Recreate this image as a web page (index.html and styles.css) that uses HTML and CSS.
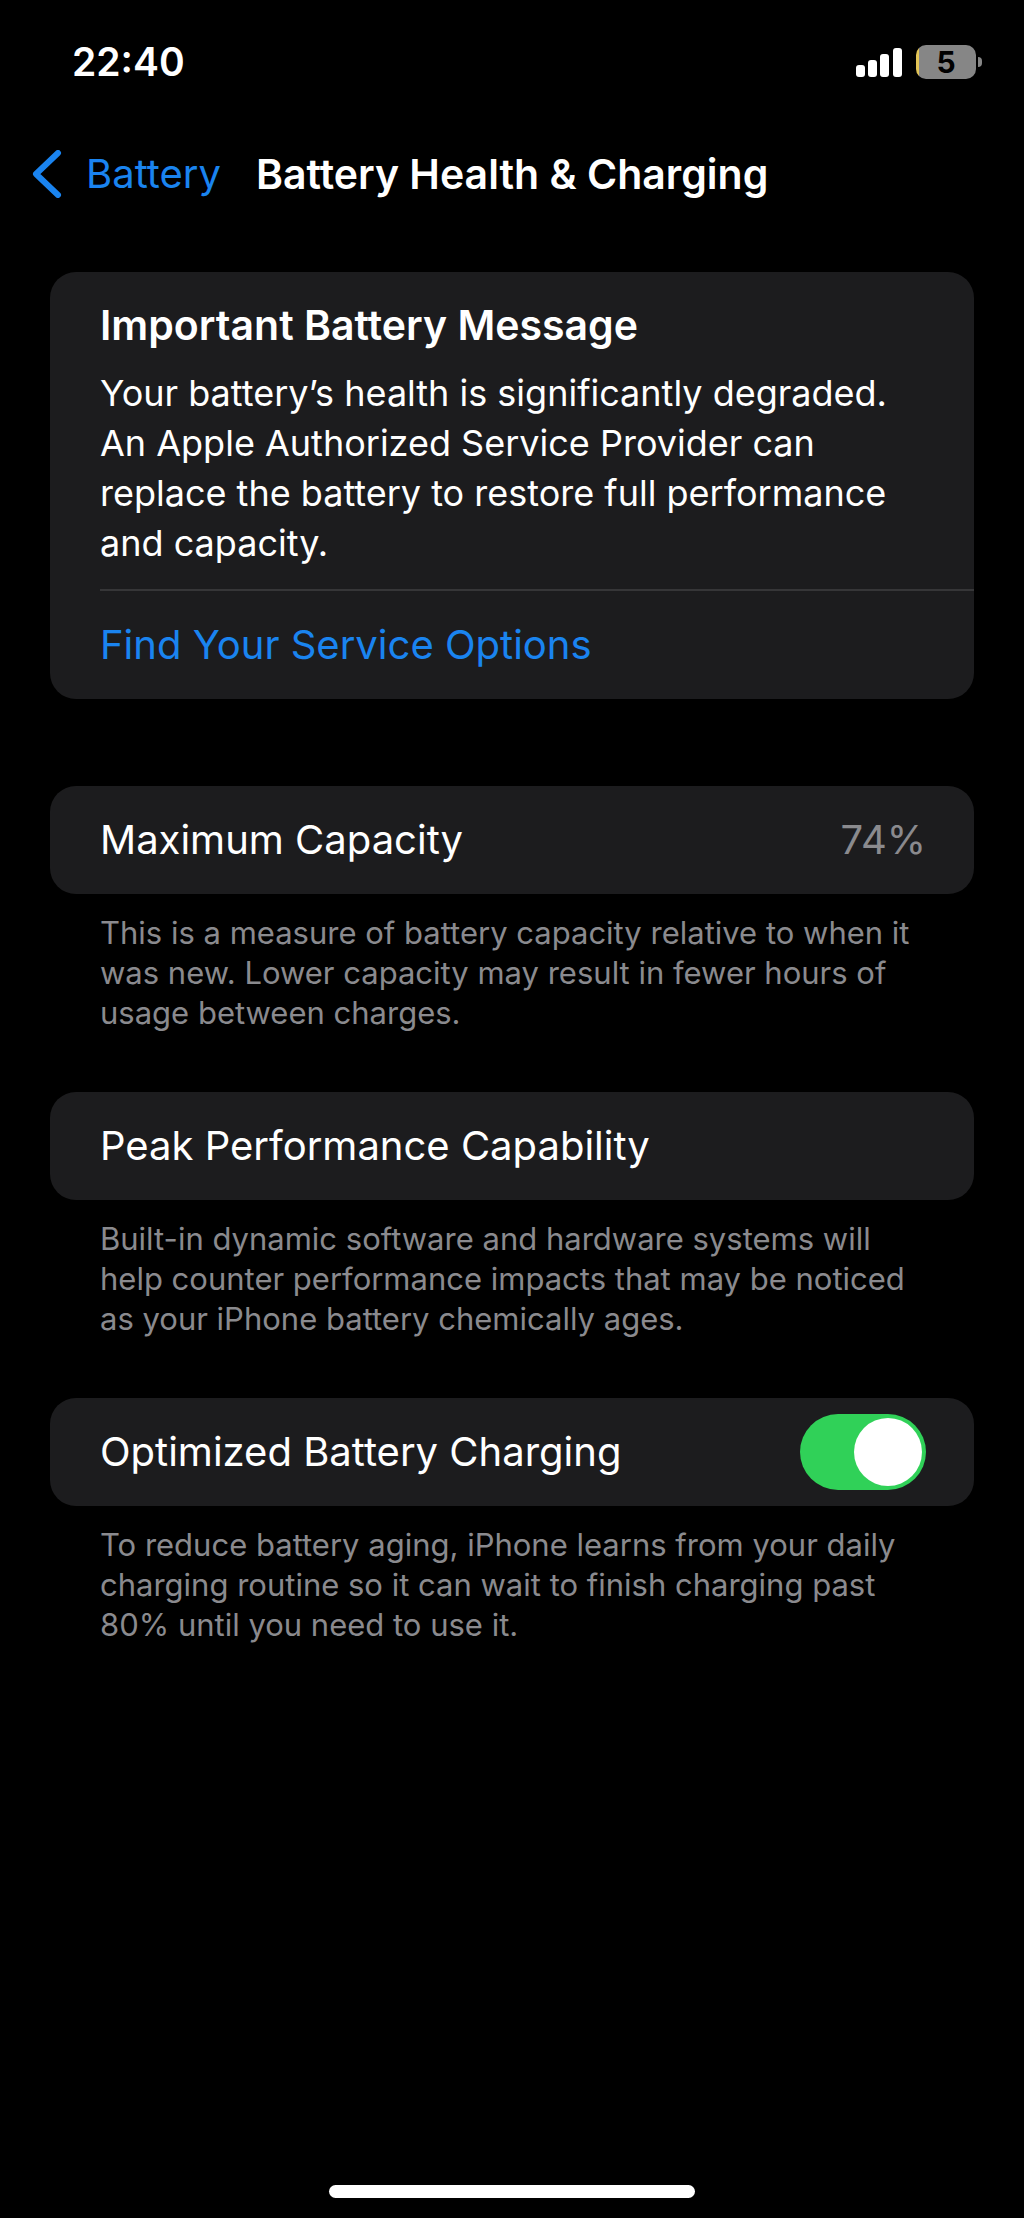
FILE: index.html
```html
<!DOCTYPE html>
<html lang="en">
<head>
<meta charset="utf-8">
<meta name="viewport" content="width=device-width, initial-scale=1">
<title>Battery Health &amp; Charging</title>
<link rel="stylesheet" href="styles.css">
</head>
<body>
<div class="status-bar">
  <time class="clock">22:40</time>
  <div class="indicators">
    <svg class="signal" viewBox="0 0 46 30" aria-hidden="true">
      <rect x="0" y="18" width="9" height="12" rx="3"/>
      <rect x="12" y="13" width="9" height="17" rx="3"/>
      <rect x="24" y="7" width="9" height="23" rx="3"/>
      <rect x="37" y="1" width="9" height="29" rx="3"/>
    </svg>
    <div class="battery">
      <span class="battery-level">5</span>
      <span class="battery-tip"></span>
    </div>
  </div>
</div>

<header class="nav-bar">
  <a class="back" href="#">
    <svg class="chevron" viewBox="0 0 30 48" aria-hidden="true"><path d="M26 3 4 24 26 45"/></svg>
    <span>Battery</span>
  </a>
  <h1 class="nav-title">Battery Health &amp; Charging</h1>
</header>

<main class="settings">
  <section class="group group-message">
    <div class="card">
      <div class="message">
        <h2 class="message-title">Important Battery Message</h2>
        <p class="message-text">Your battery’s health is significantly degraded. An Apple Authorized Service Provider can replace the battery to restore full performance and capacity.</p>
      </div>
      <a class="row" href="#">Find Your Service Options</a>
    </div>
  </section>

  <section class="group">
    <div class="card">
      <div class="row">
        <span>Maximum Capacity</span>
        <span class="value">74%</span>
      </div>
    </div>
    <p class="footnote">This is a measure of battery capacity relative to when it was new. Lower capacity may result in fewer hours of usage between charges.</p>
  </section>

  <section class="group">
    <div class="card">
      <div class="row">
        <span>Peak Performance Capability</span>
      </div>
    </div>
    <p class="footnote">Built-in dynamic software and hardware systems will help counter performance impacts that may be noticed as your iPhone battery chemically ages.</p>
  </section>

  <section class="group">
    <div class="card">
      <div class="row">
        <label for="optimized">Optimized Battery Charging</label>
        <input class="switch" type="checkbox" role="switch" id="optimized" checked>
      </div>
    </div>
    <p class="footnote">To reduce battery aging, iPhone learns from your daily charging routine so it can wait to finish charging past 80% until you need to use it.</p>
  </section>
</main>

<div class="home-indicator"></div>
</body>
</html>
```

FILE: styles.css
```css
:root {
  --blue: #1a84f0;
  --card: #1c1c1e;
  --separator: #363638;
  --gray: #8a8a8e;
}

* {
  box-sizing: border-box;
}

body {
  display: flex;
  flex-direction: column;
  min-height: 100vh;
  margin: 0;
  background: #000;
  color: #fff;
  font-family: Inter, "Liberation Sans", sans-serif;
  font-size: 40px;
  line-height: 50px;
}

h1, h2, p {
  margin: 0;
}

a {
  color: var(--blue);
  text-decoration: none;
}

.status-bar {
  display: flex;
  align-items: center;
  justify-content: space-between;
  height: 124px;
  padding: 0 42px 0 72px;
}

.clock {
  font-size: 39px;
  font-weight: 600;
}

.indicators {
  display: flex;
  align-items: center;
  gap: 14px;
}

.signal {
  width: 46px;
  height: 30px;
  fill: #fff;
}

.battery {
  display: flex;
  align-items: center;
  gap: 2px;
}

.battery-level {
  width: 60px;
  height: 34px;
  border-radius: 10px;
  background: linear-gradient(to right, #e3c557 3px, #868686 3px);
  color: #000;
  font-size: 30px;
  font-weight: 700;
  line-height: 34px;
  text-align: center;
}

.battery-tip {
  width: 4px;
  height: 10px;
  border-radius: 0 4px 4px 0;
  background: #868686;
}

.nav-bar {
  display: flex;
  align-items: center;
  gap: 35px;
  height: 100px;
  padding: 0 32px;
}

.back {
  display: flex;
  align-items: center;
  gap: 24px;
}

.chevron {
  width: 30px;
  height: 48px;
  fill: none;
  stroke: var(--blue);
  stroke-width: 6px;
  stroke-linecap: round;
  stroke-linejoin: round;
}

.nav-title {
  font-size: 41px;
  font-weight: 600;
}

.settings {
  padding: 48px 50px 0;
}

.group {
  margin-bottom: 59px;
}

.group-message {
  margin-bottom: 87px;
}

.card {
  overflow: hidden;
  border-radius: 26px;
  background: var(--card);
}

.message {
  margin-left: 50px;
  padding: 28px 50px 21px 0;
  border-bottom: 2px solid var(--separator);
}

.message-title {
  margin-bottom: 18px;
  font-size: 41px;
  font-weight: 600;
}

.message-text {
  font-size: 36px;
}

.row {
  display: flex;
  align-items: center;
  justify-content: space-between;
  min-height: 108px;
  padding: 16px 48px 16px 50px;
}

.value {
  color: var(--gray);
}

.footnote {
  padding: 19px 48px 0 50px;
  color: var(--gray);
  font-size: 31px;
  line-height: 40px;
}

.switch {
  display: flex;
  align-items: center;
  justify-content: flex-end;
  width: 126px;
  height: 76px;
  margin: 0;
  padding: 4px;
  border-radius: 38px;
  background: #39393d;
  appearance: none;
}

.switch::before {
  width: 68px;
  height: 68px;
  margin-right: auto;
  border-radius: 50%;
  background: #fff;
  content: "";
}

.switch:checked {
  background: #30d158;
}

.switch:checked::before {
  margin-right: 0;
}

.home-indicator {
  width: 366px;
  max-width: 60%;
  height: 13px;
  margin: auto auto 20px;
  border-radius: 7px;
  background: #fff;
}
```
